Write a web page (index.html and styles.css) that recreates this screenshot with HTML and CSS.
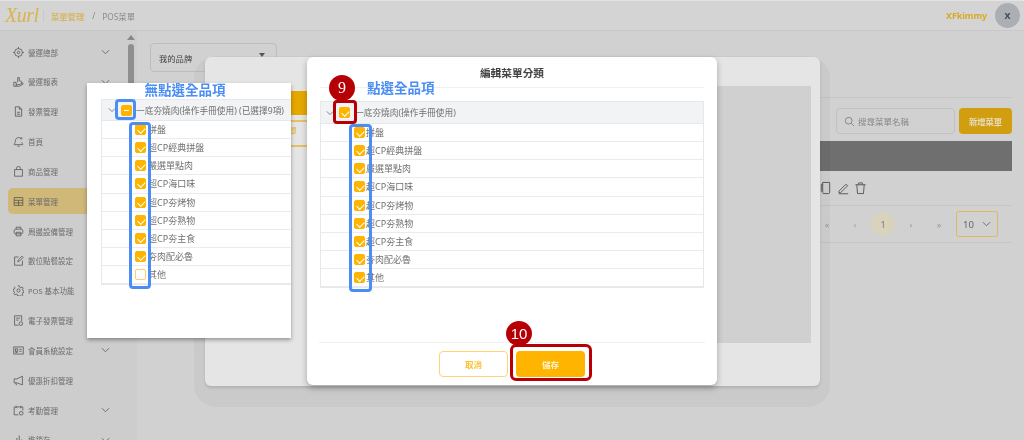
FILE: index.html
```html
<!DOCTYPE html>
<html lang="zh-Hant">
<head>
    <meta charset="UTF-8">
    <meta name="viewport" content="width=device-width, initial-scale=1.0">
    <title>POS菜單</title>
    <link rel="stylesheet" href="styles.css">
</head>
<body>
    <div class="page">
        <header class="topbar">
            <span class="logo">Xurl</span>
            <span class="crumb-line"></span>
            <span class="crumb-link">菜單管理</span>
            <span class="crumb-sep">/</span>
            <span class="crumb-now">POS菜單</span>
            <span class="user-name">XFkimmy</span>
            <span class="avatar">X</span>
        </header>
        <div class="layout">
            <nav class="sidebar">
                <div class="nav-item">
                    <svg class="nav-icon" viewBox="0 0 14 14"><circle cx="7" cy="7" r="5"/><circle cx="7" cy="7" r="1.6"/><path d="M7 0v2M7 12v2M0 7h2M12 7h2"/></svg>
                    <span>營運總部</span>
                    <svg class="chev" viewBox="0 0 10 6"><path d="M1 1l4 4 4-4"/></svg>
                </div>
                <div class="nav-item">
                    <svg class="nav-icon" viewBox="0 0 14 14"><path d="M1 13V8h3v5zM4 11h4l4-2c1-.5 1 1 .5 1.500L8 13H4M6 8V2h2v4l3 1v2"/></svg>
                    <span>營運報表</span>
                    <svg class="chev" viewBox="0 0 10 6"><path d="M1 1l4 4 4-4"/></svg>
                </div>
                <div class="nav-item">
                    <svg class="nav-icon" viewBox="0 0 14 14"><path d="M3 1h5l3 3v9H3zM8 1v3h3M5 8h4M5 10.500h4"/></svg>
                    <span>發票管理</span>
                </div>
                <div class="nav-item">
                    <svg class="nav-icon" viewBox="0 0 14 14"><path d="M9 2.500A4 4 0 0 0 3 6c0 3-1.500 4-1.500 5h11c0-1-1-1.500-1.400-3M5.500 13h3"/><circle cx="10.500" cy="3" r="1"/></svg>
                    <span>首頁</span>
                </div>
                <div class="nav-item">
                    <svg class="nav-icon" viewBox="0 0 14 14"><path d="M2 4.500h10V13H2zM4.500 4.500V3a2.500 2.500 0 0 1 5 0v1.500"/></svg>
                    <span>商品管理</span>
                </div>
                <div class="nav-item active">
                    <svg class="nav-icon" viewBox="0 0 14 14"><path d="M1.500 2h11v10h-11zM1.500 5.500h11M1.500 8.800h11M7 5.500V12"/></svg>
                    <span>菜單管理</span>
                </div>
                <div class="nav-item">
                    <svg class="nav-icon" viewBox="0 0 14 14"><rect x="1.500" y="4" width="11" height="6" rx="2"/><path d="M4 4V1.500h6V4M4 8h6v4.500H4z"/></svg>
                    <span>周邊設備管理</span>
                </div>
                <div class="nav-item">
                    <svg class="nav-icon" viewBox="0 0 14 14"><path d="M7 2.500H2V13h10V7M6 8.500l.5-2L11.500 1.500l1.500 1.500-5 5z"/></svg>
                    <span>數位點餐設定</span>
                </div>
                <div class="nav-item">
                    <svg class="nav-icon" viewBox="0 0 14 14"><circle cx="7" cy="7" r="2"/><path d="M6 1h2l.4 1.800 1.600.7 1.600-1 1.400 1.400-1 1.600.7 1.600 1.300.4v2l-1.800.4-.7 1.600 1 1.600-1.400 1.400-1.600-1-1.600.7L8 14H6l-.4-1.800-1.600-.7-1.600 1L1 11.100l1-1.600-.7-1.600L0 7.500v-2l1.800-.4.7-1.600-1-1.600"/></svg>
                    <span>POS 基本功能</span>
                </div>
                <div class="nav-item">
                    <svg class="nav-icon" viewBox="0 0 14 14"><path d="M7 13H2V1h9v7M4 4h5M4 6.500h3"/><circle cx="10" cy="11" r="2.300"/></svg>
                    <span>電子發票管理</span>
                </div>
                <div class="nav-item">
                    <svg class="nav-icon" viewBox="0 0 14 14"><rect x="1" y="2.500" width="12" height="9"/><rect x="3" y="5" width="3" height="3"/><path d="M8 5.500h3M8 8h3M3 9.500h3"/></svg>
                    <span>會員系統設定</span>
                    <svg class="chev" viewBox="0 0 10 6"><path d="M1 1l4 4 4-4"/></svg>
                </div>
                <div class="nav-item">
                    <svg class="nav-icon" viewBox="0 0 14 14"><path d="M12 1.500v11L5 10H1.500V5H5zM3.500 10l1 3"/></svg>
                    <span>優惠折扣管理</span>
                </div>
                <div class="nav-item">
                    <svg class="nav-icon" viewBox="0 0 14 14"><path d="M7 12.500H1.500v-10h11V7M4 1v3M10 1v3"/><circle cx="10.500" cy="10.500" r="2.300"/></svg>
                    <span>考勤管理</span>
                    <svg class="chev" viewBox="0 0 10 6"><path d="M1 1l4 4 4-4"/></svg>
                </div>
                <div class="nav-item">
                    <svg class="nav-icon" viewBox="0 0 14 14"><path d="M2 13V8M5 13V5M8 13V2M11 13V7"/></svg>
                    <span>進銷存</span>
                    <svg class="chev" viewBox="0 0 10 6"><path d="M1 1l4 4 4-4"/></svg>
                </div>
            </nav>
            <div class="scroll-track">
                <span class="scroll-arrow"></span>
                <span class="scroll-thumb"></span>
            </div>
            <main class="content">
                <div class="brand-row">
                    <div class="brand-select">我的品牌<span class="caret"></span></div>
                </div>
                <div class="tools">
                    <div class="search">
                        <svg viewBox="0 0 14 14"><circle cx="6" cy="6" r="4.300"/><path d="M9.200 9.200L13 13"/></svg>
                        <span>搜尋菜單名稱</span>
                    </div>
                    <div class="add-btn">新增菜單</div>
                </div>
                <div class="table-head"></div>
                <div class="table-row">
                    <svg viewBox="0 0 14 14"><path d="M4 1h7.500v10.500c0 1-.5 1.500-1.500 1.500H5c-1 0-1-.5-1-1.500zM4 3H2.500v8"/></svg>
                    <svg viewBox="0 0 14 14"><path d="M2 10.500L9.500 3l2 1.500L4 12H2zM2 13.200h10"/></svg>
                    <svg viewBox="0 0 14 14"><path d="M1.500 3.500h11M5 3.500V1.500h4v2M3 3.500l.8 9.500h6.400l.8-9.500"/></svg>
                </div>
                <div class="pager">
                    <span class="page-btn">&laquo;</span>
                    <span class="page-btn">&lsaquo;</span>
                    <span class="page-btn current">1</span>
                    <span class="page-btn">&rsaquo;</span>
                    <span class="page-btn">&raquo;</span>
                    <div class="size-select">10<svg class="chev" viewBox="0 0 10 6"><path d="M1 1l4 4 4-4"/></svg></div>
                </div>
            </main>
        </div>

        <div class="halo"></div>

        <div class="modal-back">
            <div class="back-left">
                <div class="back-band"></div>
                <div class="back-line"></div>
                <div class="back-word">單</div>
                <div class="back-line"></div>
            </div>
            <div class="back-right"></div>
        </div>

        <section class="modal">
            <h2 class="modal-title">編輯菜單分類</h2>
            <div class="tree">
                <div class="tree-head">
                    <svg class="chev" viewBox="0 0 10 6"><path d="M1 1l4 4 4-4"/></svg>
                    <span class="check on"></span>
                    <span>一底夯燒肉(操作手冊使用)</span>
                </div>
                <div class="tree-row"><span class="check on"></span><span>拼盤</span></div>
                <div class="tree-row"><span class="check on"></span><span>超CP經典拼盤</span></div>
                <div class="tree-row"><span class="check on"></span><span>嚴選單點肉</span></div>
                <div class="tree-row"><span class="check on"></span><span>超CP海口味</span></div>
                <div class="tree-row"><span class="check on"></span><span>超CP夯烤物</span></div>
                <div class="tree-row"><span class="check on"></span><span>超CP夯熟物</span></div>
                <div class="tree-row"><span class="check on"></span><span>超CP夯主食</span></div>
                <div class="tree-row"><span class="check on"></span><span>夯肉配必魯</span></div>
                <div class="tree-row"><span class="check on"></span><span>其他</span></div>
            </div>
            <footer class="modal-foot">
                <button class="btn-cancel">取消</button>
                <button class="btn-save">儲存</button>
            </footer>
        </section>

        <section class="popup">
            <div class="popup-title">無點選全品項</div>
            <div class="tree">
                <div class="tree-head">
                    <svg class="chev" viewBox="0 0 10 6"><path d="M1 1l4 4 4-4"/></svg>
                    <span class="check part"></span>
                    <span>一底夯燒肉(操作手冊使用) (已選擇9項)</span>
                </div>
                <div class="tree-row"><span class="check on"></span><span>拼盤</span></div>
                <div class="tree-row"><span class="check on"></span><span>超CP經典拼盤</span></div>
                <div class="tree-row"><span class="check on"></span><span>嚴選單點肉</span></div>
                <div class="tree-row"><span class="check on"></span><span>超CP海口味</span></div>
                <div class="tree-row"><span class="check on"></span><span>超CP夯烤物</span></div>
                <div class="tree-row"><span class="check on"></span><span>超CP夯熟物</span></div>
                <div class="tree-row"><span class="check on"></span><span>超CP夯主食</span></div>
                <div class="tree-row"><span class="check on"></span><span>夯肉配必魯</span></div>
                <div class="tree-row"><span class="check"></span><span>其他</span></div>
            </div>
        </section>

        <!-- callouts drawn over the screenshot -->
        <div class="mark-blue popup-head-mark"></div>
        <div class="mark-blue popup-list-mark"></div>
        <div class="mark-blue modal-list-mark"></div>
        <div class="mark-red modal-head-mark"></div>
        <div class="mark-red save-mark"></div>
        <div class="step step-9">9</div>
        <div class="step step-10">10</div>
        <div class="note-blue">點選全品項</div>
    </div>
</body>
</html>
```

FILE: styles.css
```css
* {
    box-sizing: border-box;
}
html, body {
    margin: 0;
    height: 100%;
    overflow: hidden;
}
body {
    font-family: "Noto Sans", "Noto Sans CJK TC", sans-serif;
    color: #555;
}
.page {
    position: relative;
    width: 1024px;
    height: 440px;
    overflow: hidden;
    background: #d1d1d1;
    filter: blur(0.5px);
}
svg {
    fill: none;
    stroke: currentColor;
    stroke-width: 1;
}

/* top bar */
.topbar {
    display: flex;
    align-items: center;
    height: 31px;
    padding: 0 5px;
    background: #d4d4d4;
    border-top: 1px solid #e4e4e4;
    border-bottom: 1px solid #c8c8c8;
    font-size: 8.300px;
}
.logo {
    width: 38px;
    font-family: "Liberation Serif", serif;
    font-style: italic;
    font-size: 20px;
    letter-spacing: -0.5px;
    color: #d9b44c;
}
.crumb-line {
    width: 1px;
    height: 12px;
    margin-right: 7px;
    background: #c8c8c8;
}
.crumb-link {
    color: #d7b767;
    font-weight: 700;
}
.crumb-sep {
    margin: 0 7px 0 8px;
    color: #888;
}
.crumb-now {
    color: #8b8b8b;
}
.user-name {
    margin-left: auto;
    margin-right: 8px;
    color: #d8aa20;
    font-size: 8.800px;
    font-weight: 700;
}
.avatar {
    display: flex;
    align-items: center;
    justify-content: center;
    width: 25px;
    height: 25px;
    margin-right: -1px;
    border-radius: 50%;
    background: #abafb5;
    color: #444;
    font-size: 9px;
    font-weight: 700;
}

/* page layout */
.layout {
    display: flex;
    height: 409px;
}
.sidebar {
    flex: none;
    width: 124px;
    padding-top: 8px;
    background: #cdcdcd;
}
.nav-item {
    display: flex;
    align-items: center;
    width: 110px;
    height: 26px;
    margin: 0 0 3.850px 8px;
    padding-left: 5px;
    border-radius: 5px;
    color: #6b6b6b;
    font-size: 7.500px;
}
.nav-item.active {
    background: #cfb878;
}
.nav-icon {
    width: 11px;
    height: 11px;
    margin-right: 4px;
    color: #555;
}
.nav-item .chev {
    margin-left: auto;
    margin-right: 8px;
}
.chev {
    flex: none;
    width: 9px;
    height: 6px;
    color: #666;
}
.scroll-track {
    flex: none;
    display: flex;
    flex-direction: column;
    align-items: center;
    width: 13px;
    padding-top: 4px;
    background: #cdcdcd;
}
.scroll-arrow {
    width: 0;
    height: 0;
    border: 4px solid transparent;
    border-top: 0;
    border-bottom: 5px solid #888;
}
.scroll-thumb {
    width: 6px;
    height: 150px;
    margin-top: 4px;
    border-radius: 3px;
    background: #8f8f8f;
}
.content {
    flex: 1;
    padding: 12px 12px 0 13px;
}
.brand-row {
    height: 54px;
}
.brand-select {
    display: flex;
    align-items: center;
    justify-content: space-between;
    width: 127px;
    height: 29px;
    padding: 0 11px 0 8px;
    border: 1px solid #bdbdbd;
    border-radius: 4px;
    color: #444;
    font-size: 8.300px;
}
.caret {
    margin-bottom: 5px;
    border: 3px solid transparent;
    border-top: 4px solid #555;
    border-bottom: 0;
}
.tools {
    display: flex;
    justify-content: flex-end;
    gap: 4px;
    height: 44px;
    padding-top: 10px;
    border-top: 1px solid #c6c6c6;
}
.search {
    display: flex;
    align-items: center;
    gap: 3px;
    width: 119px;
    height: 26px;
    padding-left: 7px;
    border: 1px solid #c2c2c2;
    border-radius: 4px;
    color: #888;
    font-size: 8.500px;
}
.search svg {
    width: 11px;
    height: 11px;
    color: #777;
}
.add-btn {
    display: flex;
    align-items: center;
    justify-content: center;
    width: 53px;
    height: 26px;
    border-radius: 4px;
    background: #d19e10;
    color: #e6dcc0;
    font-size: 8.300px;
    font-weight: 700;
}
.table-head {
    height: 30px;
    background: #6f6f6f;
}
.table-row {
    display: flex;
    align-items: center;
    gap: 4.500px;
    height: 35px;
    padding-left: 669px;
    border-bottom: 1px solid #c6c6c6;
    color: #555;
}
.table-row svg {
    width: 13px;
    height: 14px;
}
.pager {
    display: flex;
    align-items: center;
    height: 37px;
    padding-left: 665px;
    border-bottom: 1px solid #c6c6c6;
    color: #999;
    font-size: 9px;
}
.page-btn {
    display: flex;
    align-items: center;
    justify-content: center;
    width: 24px;
    height: 24px;
    margin-right: 4px;
    border-radius: 50%;
}
.page-btn.current {
    background: #d9d2bd;
    color: #777;
}
.size-select {
    display: flex;
    align-items: center;
    justify-content: space-between;
    width: 42px;
    height: 26px;
    padding: 0 6px;
    margin-left: 1px;
    border: 1px solid #d8bb5e;
    border-radius: 3px;
    color: #666;
    font-size: 9.500px;
}

/* modals */
.halo {
    position: absolute;
    left: 194px;
    top: 56px;
    width: 636px;
    height: 351px;
    border-radius: 22px;
    background: rgba(0, 0, 0, 0.03);
}
.modal-back {
    position: absolute;
    left: 205px;
    top: 57px;
    display: flex;
    width: 615px;
    height: 329px;
    padding: 29px 9px 43px 0;
    border-radius: 6px;
    background: #e5e5e5;
    box-shadow: 0 2px 3px rgba(0, 0, 0, 0.12);
}
.back-left {
    width: 512px;
    padding-top: 5px;
}
.back-right {
    flex: 1;
    background: #d0d0d0;
}
.back-band {
    height: 24px;
    background: #e5a800;
}
.back-line {
    height: 2px;
    margin-top: 5px;
    background: #e4c25c;
}
.back-word {
    height: 18px;
    padding: 3px 0 0 84px;
    color: #e0b840;
    font-size: 8px;
}
.modal {
    position: absolute;
    left: 307px;
    top: 57px;
    display: flex;
    flex-direction: column;
    width: 410px;
    height: 328px;
    padding: 0 13px;
    border-radius: 6px;
    background: #fff;
    box-shadow: 0 3px 6px rgba(0, 0, 0, 0.28);
}
.modal-title {
    height: 31px;
    margin: 0 0 13px;
    padding-top: 8px;
    border-bottom: 1px solid #f0f0f0;
    color: #444;
    font-size: 10.700px;
    font-weight: 700;
    line-height: 17px;
    text-align: center;
}
.tree {
    border: 1px solid #e6e8ec;
    color: #707070;
    font-size: 9px;
}
.tree-head {
    display: flex;
    align-items: center;
    height: 22px;
    padding-left: 5px;
    background: #f2f3f5;
    border-bottom: 1px solid #e6e8ec;
    font-size: 8.700px;
    white-space: nowrap;
}
.tree-head .chev {
    width: 8px;
    margin-right: 5px;
}
.tree-head .check {
    margin-right: 5px;
}
.tree-row {
    display: flex;
    align-items: center;
    height: 18.150px;
    padding-left: 33px;
    border-bottom: 1px solid #e9ebee;
    background: #fff;
}
.tree-row .check {
    margin-right: 1px;
}
.check {
    position: relative;
    flex: none;
    width: 11px;
    height: 11px;
    border: 1px solid #fbd06a;
    border-radius: 2px;
    background: #fff;
}
.check.on, .check.part {
    border-color: #ffb400;
    background: #ffb400;
}
.check.on::after {
    content: "";
    position: absolute;
    left: 3px;
    top: 1px;
    width: 3.500px;
    height: 6px;
    border: solid #fff;
    border-width: 0 1.500px 1.500px 0;
    transform: rotate(45deg);
}
.check.part::after {
    content: "";
    position: absolute;
    left: 2px;
    top: 4px;
    width: 5px;
    height: 1px;
    background: #fff;
}
.modal-foot {
    display: flex;
    justify-content: center;
    gap: 8px;
    margin: 54px -1px 0;
    padding-top: 8px;
    border-top: 1px solid #f0f0f0;
}
.btn-cancel, .btn-save {
    width: 69px;
    height: 26px;
    padding: 0;
    border-radius: 4px;
    font-family: inherit;
    font-size: 8.500px;
    font-weight: 700;
}
.btn-cancel {
    border: 1px solid #ffd572;
    background: #fff;
    color: #ffc233;
}
.btn-save {
    border: none;
    background: #ffb400;
    color: #fff3cf;
}
.popup {
    position: absolute;
    left: 87px;
    top: 83px;
    width: 204px;
    height: 255px;
    padding-left: 14px;
    background: #fff;
    box-shadow: 0 2px 4px rgba(0, 0, 0, 0.35);
}
.popup-title {
    width: 168px;
    height: 16px;
    color: #4a8ef5;
    font-size: 13.500px;
    font-weight: 700;
    line-height: 15px;
    text-align: center;
}
.popup .tree {
    width: 190px;
    border-right: 0;
}
.popup .tree-head {
    height: 21px;
    padding-left: 6px;
}
.popup .tree-head .check {
    margin-right: 4px;
}
.popup .tree-row .check {
    margin-right: 2px;
}

/* callouts */
.mark-blue, .mark-red {
    position: absolute;
    border-style: solid;
    border-width: 3px;
    border-radius: 4px;
}
.mark-blue {
    border-color: #4a8ef5;
}
.mark-red {
    border-color: #b60005;
}
.popup-head-mark {
    left: 115px;
    top: 99px;
    width: 21px;
    height: 21px;
}
.popup-list-mark {
    left: 129px;
    top: 122px;
    width: 22px;
    height: 167px;
}
.modal-list-mark {
    left: 349px;
    top: 124px;
    width: 23px;
    height: 168px;
}
.modal-head-mark {
    left: 333px;
    top: 100px;
    width: 24px;
    height: 24px;
}
.save-mark {
    left: 510px;
    top: 344px;
    width: 82px;
    height: 37px;
    border-radius: 6px;
}
.step {
    position: absolute;
    display: flex;
    align-items: center;
    justify-content: center;
    border-radius: 50%;
    background: #b60005;
    color: #fff;
    font-family: "Liberation Sans", sans-serif;
}
.step-9 {
    left: 329px;
    top: 75px;
    width: 26px;
    height: 26px;
    font-family: "Liberation Serif", serif;
    font-size: 16px;
}
.step-10 {
    left: 506px;
    top: 321px;
    width: 26px;
    height: 25px;
    font-size: 15px;
}
.note-blue {
    position: absolute;
    left: 367px;
    top: 78px;
    color: #4a8ef5;
    font-size: 13.500px;
    font-weight: 700;
    line-height: 20px;
}
```
